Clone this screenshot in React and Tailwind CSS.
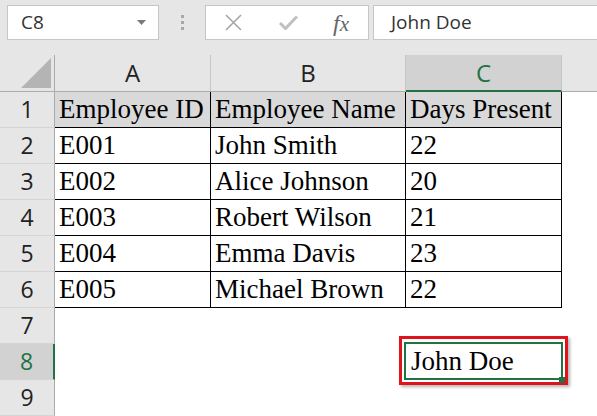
import React from "react";

const serif = { fontFamily: '"Liberation Serif", "Times New Roman", serif' };
const sans = { fontFamily: '"Open Sans", "Noto Sans", sans-serif' };

const rows = [
  ["Employee ID", "Employee Name", "Days Present"],
  ["E001", "John Smith", "22"],
  ["E002", "Alice Johnson", "20"],
  ["E003", "Robert Wilson", "21"],
  ["E004", "Emma Davis", "23"],
  ["E005", "Michael Brown", "22"],
];

function RowHeader({ n, selected }) {
  return (
    <div
      className={
        "w-[55px] shrink-0 h-full flex items-center justify-center text-[23px] border-b border-b-[#d4d4d4] " +
        (selected
          ? "bg-[#d2d2d2] text-[#217346] border-r-2 border-r-[#217346]"
          : "bg-[#e6e6e6] text-[#222] border-r border-r-[#ababab]")
      }
      style={sans}
    >
      {n}
    </div>
  );
}

export default function App() {
  return (
    <div className="w-[597px] h-[416px] overflow-hidden bg-white relative select-none">
      {/* Formula bar area */}
      <div className="h-[55px] bg-[#e6e6e6] flex items-start pt-[5px] pl-[7px]">
        <div className="w-[152px] h-[35px] bg-white border border-[#c6c6c6] flex items-center justify-between pl-[13px] pr-[12px]">
          <span className="text-[19px] text-[#333]" style={sans}>C8</span>
          <svg width="9" height="5" viewBox="0 0 9 5">
            <path d="M0 0 L9 0 L4.5 5 Z" fill="#7a7a7a" />
          </svg>
        </div>
        <div className="w-[46px] h-[35px] flex flex-col items-center justify-center gap-[3px]">
          <div className="w-[3px] h-[3px] bg-[#a8a8a8]" />
          <div className="w-[3px] h-[3px] bg-[#a8a8a8]" />
          <div className="w-[3px] h-[3px] bg-[#a8a8a8]" />
        </div>
        <div className="w-[164px] h-[35px] bg-white border border-[#c6c6c6] flex items-center">
          <div className="w-[55px] flex justify-center">
            <svg width="17" height="17" viewBox="0 0 17 17">
              <path d="M1 1 L16 16 M16 1 L1 16" stroke="#a6a6a6" strokeWidth="1.6" />
            </svg>
          </div>
          <div className="w-[55px] flex justify-center">
            <svg width="19" height="15" viewBox="0 0 19 15">
              <path d="M1 8 L6.5 13.5 L18 1.5" stroke="#c0c0c0" strokeWidth="3" fill="none" />
            </svg>
          </div>
          <div className="w-[50px] flex justify-center">
            <span className="italic text-[24px] text-[#666] leading-none" style={serif}>
              f<span className="text-[21px]">x</span>
            </span>
          </div>
        </div>
        <div className="ml-[4px] flex-1 h-[35px] bg-white border border-[#c6c6c6] border-r-0 flex items-center pl-[17px]">
          <span className="text-[19px] text-[#333]" style={sans}>John Doe</span>
        </div>
      </div>

      {/* Column headers */}
      <div className="h-[37px] flex bg-[#e6e6e6] border-b border-b-[#ababab]">
        <div className="w-[55px] shrink-0 border-r border-r-[#ababab] relative">
          <svg className="absolute right-[3px] bottom-[3px]" width="30" height="30" viewBox="0 0 30 30">
            <path d="M30 0 L30 30 L0 30 Z" fill="#b4b4b4" />
          </svg>
        </div>
        <div className="w-[156px] border-r border-r-[#c6c6c6] flex items-center justify-center text-[24px] text-[#222]" style={sans}>A</div>
        <div className="w-[195px] border-r border-r-[#c6c6c6] flex items-center justify-center text-[24px] text-[#222]" style={sans}>B</div>
        <div className="w-[156px] bg-[#d2d2d2] border-r border-r-[#c6c6c6] border-b-2 border-b-[#217346] -mb-[1px] flex items-center justify-center text-[24px] text-[#217346]" style={sans}>C</div>
        <div className="flex-1" />
      </div>

      {/* Rows */}
      {rows.map((r, i) => (
        <div key={i} className="h-[36px] flex">
          <RowHeader n={i + 1} />
          {r.map((c, j) => (
            <div
              key={j}
              className={
                "h-full border-r border-b border-black pl-[4px] text-[27px] leading-[35px] text-black whitespace-nowrap overflow-hidden " +
                (i === 0 ? "bg-[#d9d9d9] " : "bg-white ") +
                (j === 1 ? "w-[195px]" : "w-[156px]")
              }
              style={serif}
            >
              {c}
            </div>
          ))}
        </div>
      ))}

      {[7, 8, 9].map((n) => (
        <div key={n} className="h-[36px] flex">
          <RowHeader n={n} selected={n === 8} />
          <div className="w-[156px]" />
          <div className="w-[195px]" />
          <div className="w-[156px] relative">
            {n === 8 && (
              <>
                <div className="absolute -left-[7px] -top-[8px] w-[169px] h-[49px] border-[3px] border-[#e0121b] shadow-[2px_2px_3px_rgba(0,0,0,0.3)]" />
                <div className="absolute -left-[2px] -top-[2px] w-[159px] h-[38px] border-2 border-[#217346]" />
                <div className="absolute right-[-3px] bottom-[-3px] w-[6px] h-[6px] bg-[#217346]" />
                <div className="pl-[5px] text-[27px] leading-[35px] text-black" style={serif}>
                  John Doe
                </div>
              </>
            )}
          </div>
        </div>
      ))}
    </div>
  );
}
